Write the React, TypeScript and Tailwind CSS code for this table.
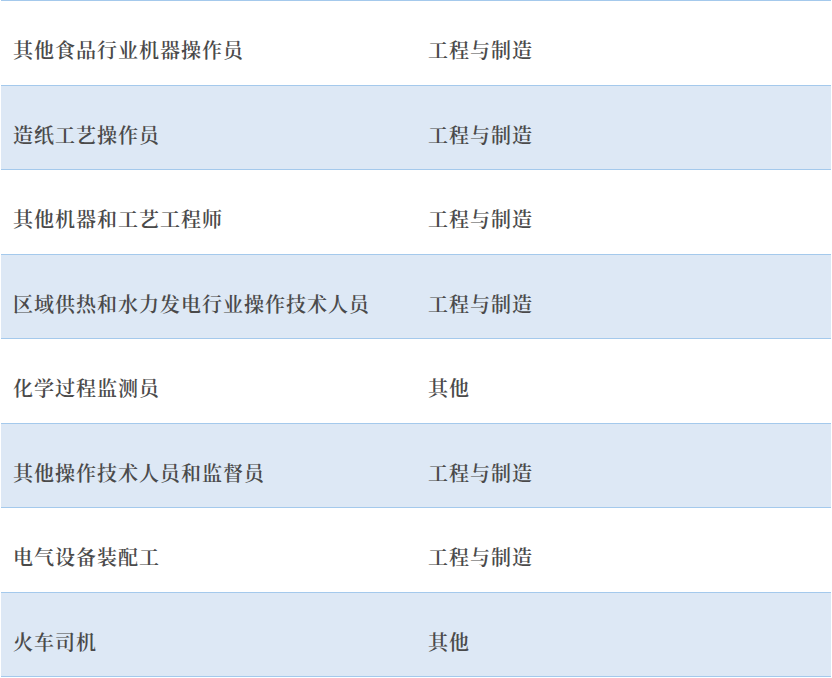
import React from "react";

const rows: [string, string][] = [
  ["其他食品行业机器操作员", "工程与制造"],
  ["造纸工艺操作员", "工程与制造"],
  ["其他机器和工艺工程师", "工程与制造"],
  ["区域供热和水力发电行业操作技术人员", "工程与制造"],
  ["化学过程监测员", "其他"],
  ["其他操作技术人员和监督员", "工程与制造"],
  ["电气设备装配工", "工程与制造"],
  ["火车司机", "其他"],
];

export default function App() {
  return (
    <div className="w-[832px] h-[678px] bg-white overflow-hidden">
      <div className="mx-[1px] border-t border-[#a4c9ec]">
        {rows.map(([a, b], i) => (
          <div
            key={i}
            className={`flex h-[84.5px] border-b border-[#a4c9ec] ${
              i % 2 === 1 ? "bg-[#dde8f5]" : "bg-white"
            }`}
          >
            <div className="w-[415px] pl-[12px] pt-[15px] flex items-center text-[20px] tracking-[1px] text-[#4a4a4a] font-semibold whitespace-nowrap [font-family:'Noto_Serif_CJK_SC','Noto_Sans_CJK_SC',serif]">
              {a}
            </div>
            <div className="flex-1 pl-[12px] pt-[15px] flex items-center text-[20px] tracking-[1px] text-[#4a4a4a] font-semibold whitespace-nowrap [font-family:'Noto_Serif_CJK_SC','Noto_Sans_CJK_SC',serif]">
              {b}
            </div>
          </div>
        ))}
      </div>
    </div>
  );
}
